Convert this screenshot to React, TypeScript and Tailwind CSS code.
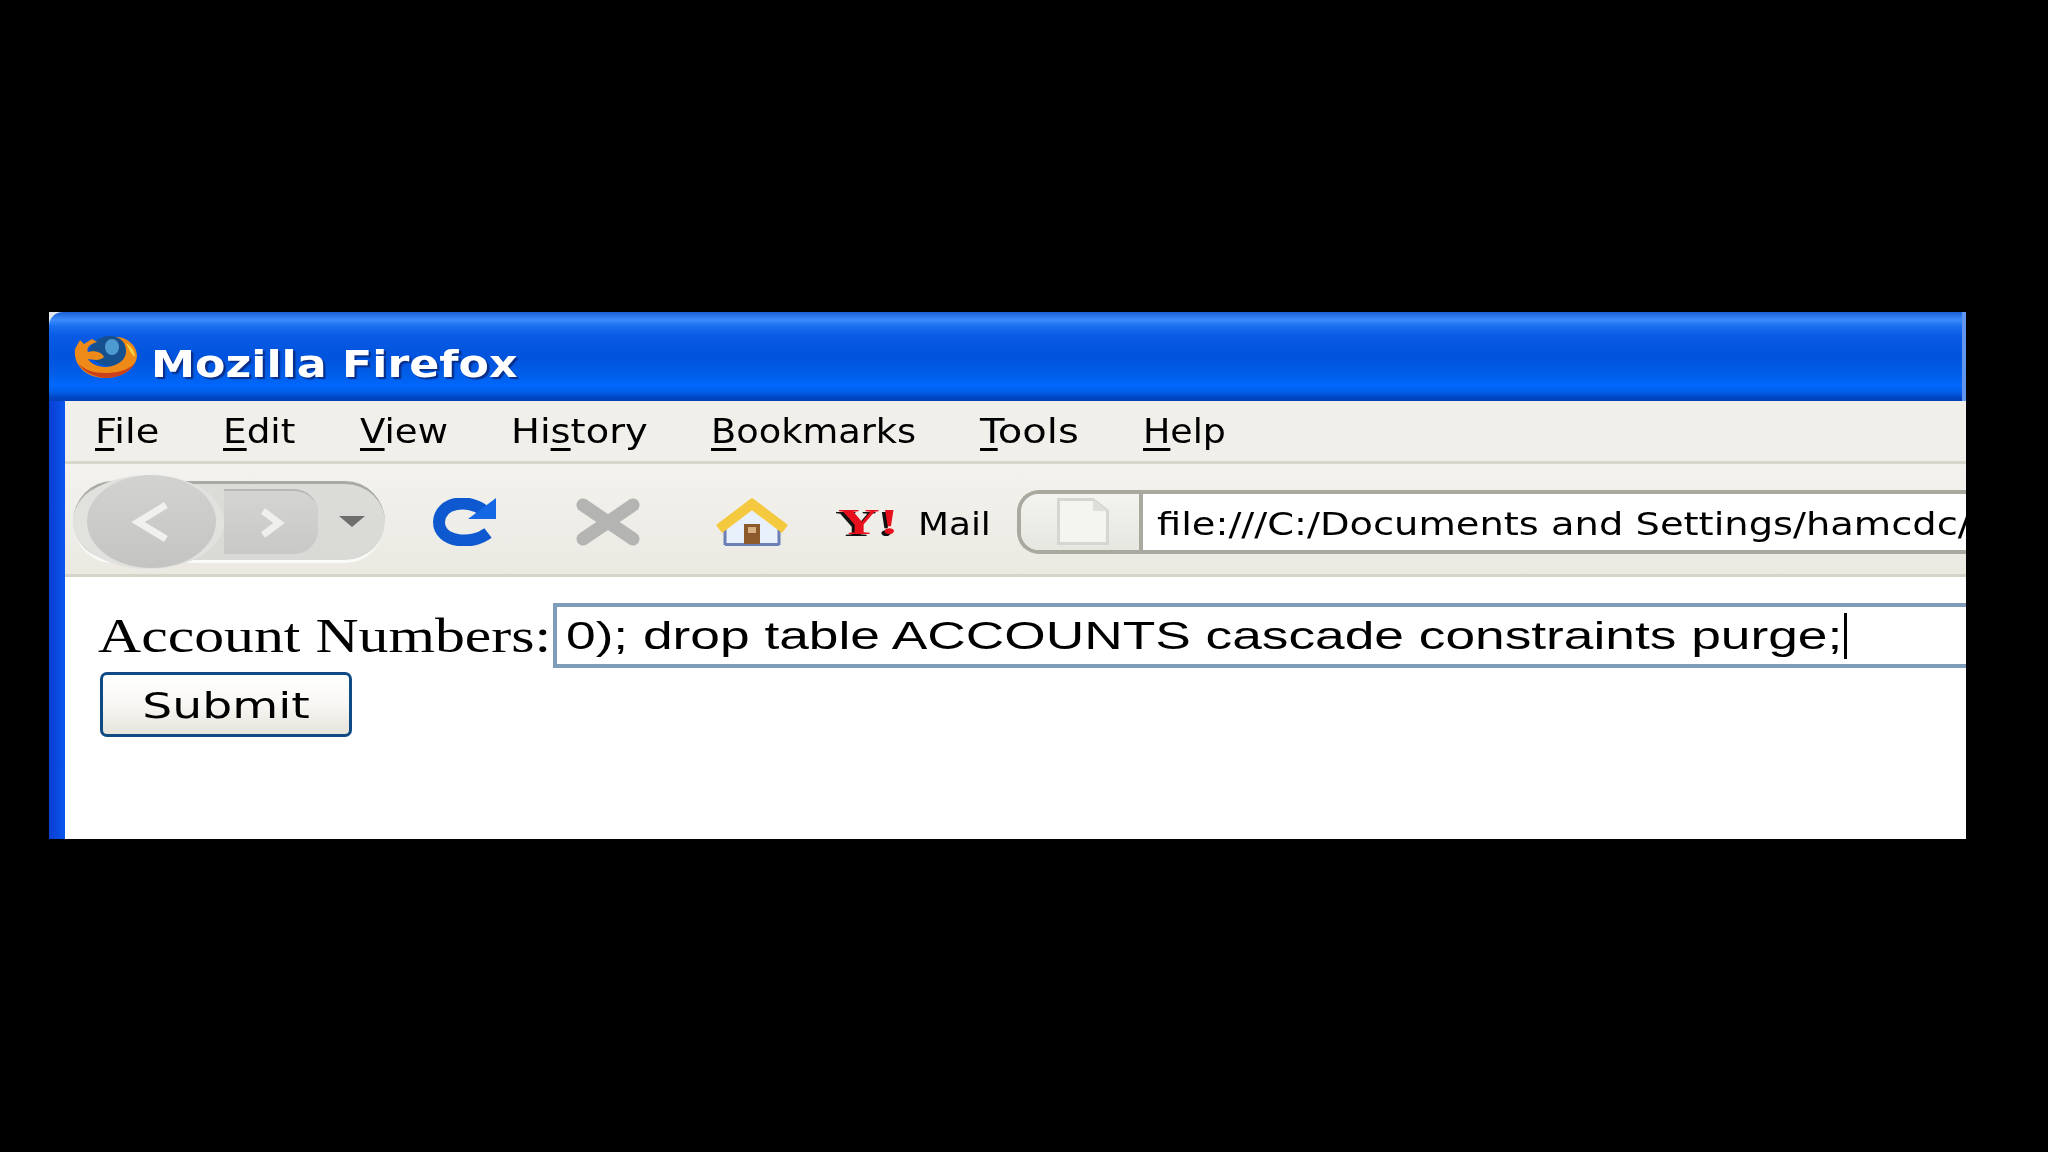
import React from 'react';

const menus: { key: string; rest: string; before?: string; box: string }[] = [
  { key: 'F', rest: 'ile', box: 'w-[63px] scale-x-[1.13]' },
  { key: 'E', rest: 'dit', box: 'w-[72px] scale-x-[1.1]' },
  { key: 'V', rest: 'iew', box: 'w-[86px] scale-x-[1.09]' },
  { before: 'Hi', key: 's', rest: 'tory', box: 'w-[135px] scale-x-[1.13]' },
  { key: 'B', rest: 'ookmarks', box: 'w-[204px] scale-x-[1.08]' },
  { key: 'T', rest: 'ools', box: 'w-[98px] scale-x-[1.18]' },
  { key: 'H', rest: 'elp', box: 'w-[84px] scale-x-[1.07]' },
];

const FirefoxLogo = () => (
  <svg width="65" height="44" viewBox="0 0 65 44" className="shrink-0">
    <ellipse cx="38" cy="16" rx="20" ry="15" fill="#17508f" />
    <ellipse cx="40" cy="12" rx="7" ry="8" fill="#4d9ad0" />
    <path d="M3 14 L8 5 L12 9 L20 4 L25 7 C17 9 14 14 16 17 C22 15 30 17 32 22 C27 27 19 24 16 24 C21 32 36 35 47 28 C54 24 56 16 52 8 C50 5 47 3 44 2 C54 2 64 9 65 20 C65 33 50 43 33 43 C16 43 1 32 3 14 Z" fill="#ee8a17" />
    <path d="M6 28 C12 38 24 42 33 43 C47 43 58 37 63 28 C55 36 44 38 33 38 C22 38 12 35 6 28 Z" fill="#c9401a" />
    <path d="M54 8 C60 12 63 17 63 22 C60 20 57 15 54 8 Z" fill="#f9d342" />
  </svg>
);

const ReloadIcon = () => (
  <svg width="63" height="48" viewBox="0 0 63 48" className="shrink-0">
    <path d="M50 12 C36 1 7 3 6 24 C6 44 38 48 55 35" fill="none" stroke="#0f59d0" strokeWidth="12" />
    <path d="M35 21 L63 21 L63 0 Z" fill="#1667e4" />
  </svg>
);

const StopIcon = () => (
  <svg width="64" height="48" viewBox="0 0 64 48" className="shrink-0">
    <path d="M7 7 L57 41 M57 7 L7 41" stroke="#b4b4b2" strokeWidth="13" strokeLinecap="round" />
  </svg>
);

const HomeIcon = () => (
  <svg width="72" height="48" viewBox="0 0 72 48" className="shrink-0">
    <path d="M9 25 L36 8 L63 25 L63 47 L9 47 Z" fill="#e8f1fb" />
    <path d="M9 46.5 L63 46.5 M9 30 L9 47 M63 30 L63 47" stroke="#6c7fb4" strokeWidth="3" fill="none" />
    <path d="M3 31 L36 6 L69 31" fill="none" stroke="#f5c93f" strokeWidth="10" />
    <rect x="28" y="26" width="16" height="20" fill="#8d5a2c" />
    <rect x="32" y="29" width="8" height="6" fill="#d7b184" />
  </svg>
);

const PageIcon = () => (
  <svg width="52" height="47" viewBox="0 0 52 47" className="shrink-0">
    <path d="M1.5 1.5 L36 1.5 L50.5 13 L50.5 45.5 L1.5 45.5 Z" fill="#f4f4f1" stroke="#d5d5d1" strokeWidth="3" />
    <path d="M36 1.5 L36 13 L50.5 13 Z" fill="#dededa" />
  </svg>
);

const NavButtons = () => (
  <div className="flex items-center w-[312px] h-[82px] shrink-0 rounded-[40px/41px] bg-gradient-to-b from-[#dcdcd9] to-[#d9d9d6] border-t-[3px] border-t-[#a9a9a6] border-b-[3px] border-b-[#fafaf8]">
    <div className="flex items-center justify-end pr-[8px] w-[151px] h-[94px] -my-[8px] rounded-[50%] bg-[#e1e1de] shrink-0">
      <div className="flex items-center justify-center w-[129px] h-[93px] rounded-[50%] bg-gradient-to-b from-[#d2d2d0] to-[#c4c4c2]">
        <svg width="44" height="42" viewBox="0 0 44 42">
          <path d="M36 4 L8 21 L36 38" fill="none" stroke="#f0f0ee" strokeWidth="7" />
        </svg>
      </div>
    </div>
    <div className="flex items-center justify-center w-[94px] h-[65px] rounded-r-[24px] bg-gradient-to-b from-[#d4d4d2] to-[#c8c8c6] border-t-[2px] border-t-[#b8b8b5] shrink-0">
      <svg width="28" height="30" viewBox="0 0 28 30">
        <path d="M6 3 L22 15 L6 27" fill="none" stroke="#efefed" strokeWidth="7" />
      </svg>
    </div>
    <div className="flex-1 flex justify-center">
      <svg width="26" height="11" viewBox="0 0 26 11">
        <path d="M0 0 L26 0 L13 11 Z" fill="#6e6e6c" />
      </svg>
    </div>
  </div>
);

export default function App() {
  return (
    <div className="w-[2048px] h-[1152px] bg-black pt-[312px] pl-[49px] overflow-hidden [font-family:'DejaVu_Sans',sans-serif]">
      <div className="w-[1917px] h-[527px] bg-[#e4e8ee] flex flex-col overflow-hidden blur-[0.6px]">
        {/* title bar */}
        <div className="h-[89px] shrink-0 rounded-tl-[14px] flex items-center pl-[23px] gap-[14px] border-r-[4px] border-r-[#5f97f0] bg-[linear-gradient(to_bottom,#1c5fd6_0px,#3c8cfb_8px,#1a70f0_14px,#0a5ae4_24px,#0053dc_45px,#005ee8_62px,#0068fc_74px,#005ee6_80px,#0044c0_86px,#0040b8_89px)]">
          <FirefoxLogo />
          <span className="mt-[14px] w-[366px] whitespace-nowrap origin-left scale-x-[1.165] text-[38px] leading-none font-bold text-white [text-shadow:2px_2px_1px_#0a2f8a]">Mozilla Firefox</span>
        </div>

        <div className="flex-1 flex min-h-0">
          <div className="w-[16px] shrink-0 bg-[linear-gradient(to_right,#0a3ed0,#0a55f0)]" />
          <div className="flex-1 min-w-0 flex flex-col">
            {/* menu bar */}
            <div className="h-[63px] shrink-0 bg-[#f1efea] border-b-[3px] border-b-[#d8d7cb] flex items-center pl-[30px] gap-[65px] text-[34px] leading-none text-black">
              {menus.map((m) => (
                <span key={m.key + m.rest} className={`inline-block whitespace-nowrap origin-left ${m.box}`}>
                  {m.before}
                  <span className="underline decoration-[3px] underline-offset-[5px]">{m.key}</span>
                  {m.rest}
                </span>
              ))}
            </div>

            {/* toolbar */}
            <div className="h-[113px] shrink-0 pt-[5px] bg-gradient-to-b from-[#f3f2ee] to-[#ebe9e2] border-b-[3px] border-b-[#d5d4c8] flex items-center pl-[8px]">
              <NavButtons />
              <div className="ml-[48px]"><ReloadIcon /></div>
              <div className="ml-[80px]"><StopIcon /></div>
              <div className="ml-[76px]"><HomeIcon /></div>
              <span className="ml-[48px] w-[65px] text-center text-[36px] leading-none font-bold scale-x-[1.6] text-[#e8101c] [font-family:'Liberation_Serif',serif] [text-shadow:-2px_2px_0_#111]">Y!</span>
              <span className="ml-[17px] mt-[4px] w-[72px] whitespace-nowrap origin-left scale-x-[1.12] text-[32px] leading-none text-black">Mail</span>
              <div className="ml-[27px] flex-1 min-w-0 h-[64px] flex border-y-[4px] border-y-[#a9a99f] rounded-l-[22px] border-l-[4px] border-l-[#a9a99f] overflow-hidden">
                <div className="w-[122px] shrink-0 flex items-center justify-center pl-[6px] bg-gradient-to-b from-[#f3f3ef] to-[#e7e7e1] border-r-[4px] border-r-[#a9a99f]">
                  <PageIcon />
                </div>
                <div className="flex-1 min-w-0 bg-white flex items-center pl-[14px] pt-[4px] text-[32px] leading-none text-black whitespace-nowrap overflow-hidden">
                  <span className="inline-block origin-left scale-x-[1.2]">file:///C:/Documents and Settings/hamcdc/</span>
                </div>
              </div>
            </div>

            {/* page */}
            <div className="flex-1 bg-white pl-[33px] pt-[26px] min-h-0">
              <div className="flex items-center h-[65px]">
                <span className="w-[455px] shrink-0 origin-left scale-x-[1.245] text-[48px] leading-none text-black whitespace-nowrap [font-family:'Liberation_Serif',serif]">Account Numbers:</span>
                <div className="flex-1 min-w-0 h-[65px] bg-white border-[4px] border-r-0 border-[#7f9db9] flex items-center pl-[9px] text-[38px] leading-none text-black whitespace-nowrap overflow-hidden [font-family:'Liberation_Sans',sans-serif]">
                  <span className="w-[1278px] shrink-0 origin-left scale-x-[1.402]">0); drop table ACCOUNTS cascade constraints purge;</span>
                  <span className="inline-block w-[3px] h-[46px] bg-black" />
                </div>
              </div>
              <button className="mt-[4px] ml-[2px] w-[252px] h-[65px] rounded-[7px] border-[3px] border-[#0f4a84] bg-gradient-to-b from-white via-[#f8f7f4] to-[#e6e3da] text-[35px] leading-none text-black">
                <span className="inline-block pt-[4px] scale-x-[1.35]">Submit</span>
              </button>
            </div>
          </div>
        </div>
      </div>
    </div>
  );
}
